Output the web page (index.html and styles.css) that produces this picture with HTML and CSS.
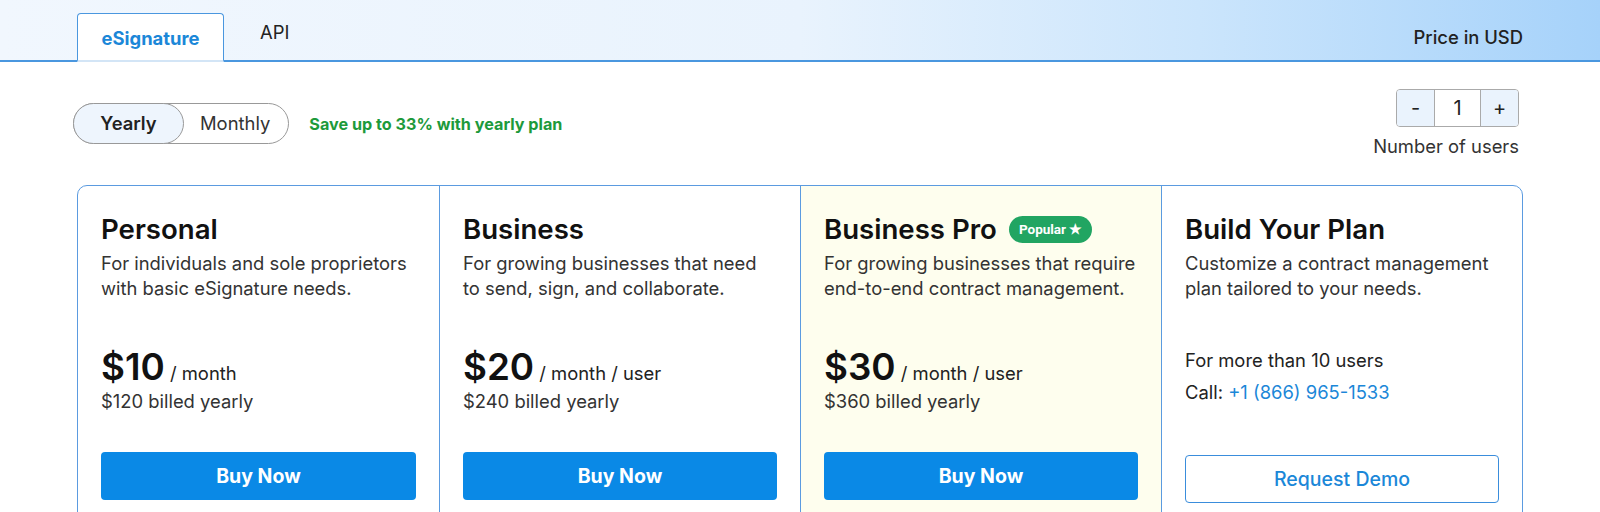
FILE: index.html
```html
<!DOCTYPE html>
<html lang="en">
<head>
    <meta charset="UTF-8">
    <title>Pricing</title>
    <link rel="stylesheet" href="styles.css">
</head>
<body>
    <div id="top-bar">
        <ul id="tabs">
            <li class="tab active">eSignature</li>
            <li class="tab">API</li>
        </ul>
        <div class="currency">Price in USD</div>
    </div>

    <div id="wrap">
        <div class="controls">
            <div class="billing">
                <div class="switch">
                    <span class="switch-opt on">Yearly</span>
                    <span class="switch-opt">Monthly</span>
                </div>
                <span class="save-note">Save up to 33% with yearly plan</span>
            </div>
            <div class="users">
                <div class="stepper">
                    <button class="step-btn">-</button>
                    <span class="step-val">1</span>
                    <button class="step-btn">+</button>
                </div>
                <div class="users-label">Number of users</div>
            </div>
        </div>

        <div class="plans">
            <div class="plan">
                <h2 class="plan-name">Personal</h2>
                <p class="plan-desc">For individuals and sole proprietors<br>with basic eSignature needs.</p>
                <div class="plan-body">
                    <div class="price"><b>$10</b>&nbsp;/ month</div>
                    <div class="billed">$120 billed yearly</div>
                </div>
                <button class="btn buy">Buy Now</button>
            </div>
            <div class="plan">
                <h2 class="plan-name">Business</h2>
                <p class="plan-desc">For growing businesses that need<br>to send, sign, and collaborate.</p>
                <div class="plan-body">
                    <div class="price"><b>$20</b>&nbsp;/ month / user</div>
                    <div class="billed">$240 billed yearly</div>
                </div>
                <button class="btn buy">Buy Now</button>
            </div>
            <div class="plan popular">
                <h2 class="plan-name">Business Pro <span class="badge">Popular &#9733;</span></h2>
                <p class="plan-desc">For growing businesses that require<br>end-to-end contract management.</p>
                <div class="plan-body">
                    <div class="price"><b>$30</b>&nbsp;/ month / user</div>
                    <div class="billed">$360 billed yearly</div>
                </div>
                <button class="btn buy">Buy Now</button>
            </div>
            <div class="plan">
                <h2 class="plan-name">Build Your Plan</h2>
                <p class="plan-desc">Customize a contract management<br>plan tailored to your needs.</p>
                <div class="plan-body contact">
                    <div class="contact-line">For more than 10 users</div>
                    <div class="contact-line">Call: <a href="#">+1 (866) 965-1533</a></div>
                </div>
                <button class="btn demo">Request Demo</button>
            </div>
        </div>
    </div>
</body>
</html>
```

FILE: styles.css
```css
body{
    margin: 0;
    font-family: Inter, "Noto Sans", sans-serif;
    font-size: 18.4px;
    color: #222;
    background: #fff;
}
#top-bar{
    height: 60px;
    display: flex;
    justify-content: space-between;
    padding: 0 77px;
    background: linear-gradient(90deg, #f1f7fe 0%, #e9f3fd 50%, #cbe5fc 75%, #a6d2fa 100%);
    border-bottom: 2px solid #4a97df;
}
#tabs{
    display: flex;
    align-items: flex-start;
    list-style: none;
    margin: 0;
    padding: 0;
}
.tab{
    font-size: 18.4px;
    line-height: 24px;
    color: #222;
    padding: 20px 0 0;
    margin-left: 36px;
}
.tab.active{
    width: 145px;
    height: 34px;
    margin: 13px 0 -2px;
    padding: 12px 0 0;
    text-align: center;
    font-weight: bold;
    color: #1b87d8;
    background: #fff;
    border: 1px solid #4a97df;
    border-bottom: 2px solid #d3e5f6;
    border-radius: 4px 4px 0 0;
}
.currency{
    font-size: 18.4px;
    font-weight: 500;
    padding-top: 25px;
    line-height: 24px;
}
#wrap{
    margin: 0 77px;
    padding-top: 27px;
}
.controls{
    display: flex;
    justify-content: space-between;
    align-items: flex-start;
}
.billing{
    display: flex;
    align-items: center;
    margin: 14px 0 0 -4px;
}
.switch{
    display: flex;
    height: 39px;
    border: 1px solid #999;
    border-radius: 21px;
}
.switch-opt{
    font-size: 18.4px;
    line-height: 39px;
    padding: 0 18px 0 16px;
    color: #333;
}
.switch-opt.on{
    width: 111px;
    box-sizing: border-box;
    margin: -1px 0 -1px -1px;
    padding: 0;
    line-height: 39px;
    text-align: center;
    font-weight: 600;
    color: #222;
    background: #eef5fd;
    border: 1px solid #999;
    border-radius: 21px;
}
.save-note{
    font-size: 16.2px;
    font-weight: bold;
    color: #1d9a3b;
    margin-left: 20px;
}
.users{
    display: flex;
    flex-direction: column;
    align-items: flex-end;
    margin-right: 4px;
}
.stepper{
    display: flex;
    height: 36px;
    border: 1px solid #aaa;
    border-radius: 4px;
    overflow: hidden;
}
.step-btn{
    width: 37px;
    border: 0;
    padding: 0;
    background: #eaf3fd;
    font-family: Inter, sans-serif;
    font-size: 20px;
    color: #222;
}
.step-val{
    width: 45px;
    text-align: center;
    font-size: 20px;
    line-height: 36px;
    border-left: 1px solid #aaa;
    border-right: 1px solid #aaa;
    background: #fff;
}
.users-label{
    font-size: 18.4px;
    line-height: 24px;
    margin-top: 7px;
    color: #333;
}
.plans{
    display: grid;
    grid-template-columns: repeat(4, 1fr);
    margin-top: 27px;
    border: 1px solid #5b9be0;
    border-radius: 10px;
    overflow: hidden;
}
.plan{
    padding: 26px 23px 60px 23px;
    border-left: 1px solid #5b9be0;
}
.plan:first-child{
    border-left: 0;
}
.plan.popular{
    background: #fefeee;
}
.plan-name{
    display: flex;
    align-items: center;
    margin: 0;
    font-size: 27.6px;
    line-height: 34px;
    font-weight: 600;
    color: #111;
}
.badge{
    font-family: Roboto, sans-serif;
    font-size: 13.5px;
    font-weight: bold;
    line-height: 27px;
    color: #fff;
    background: #21a562;
    border-radius: 14px;
    padding: 0 10px;
    margin-left: 12px;
}
.plan-desc{
    margin: 5px 0 0;
    font-size: 18.4px;
    line-height: 25px;
    color: #333;
}
.plan-body{
    height: 151px;
    box-sizing: border-box;
    padding-top: 43px;
}
.price{
    display: flex;
    align-items: baseline;
    height: 45px;
    font-size: 18.4px;
    color: #222;
}
.price b{
    font-size: 36.8px;
    line-height: 45px;
    font-weight: 600;
    color: #111;
}
.billed{
    font-size: 18.4px;
    line-height: 25px;
    color: #333;
}
.plan-body.contact{
    height: 154px;
    padding-top: 47px;
}
.contact-line{
    font-size: 18.4px;
    line-height: 25px;
    margin-bottom: 7px;
    color: #222;
}
.contact-line a{
    color: #1b87d8;
    text-decoration: none;
}
.btn{
    display: block;
    width: 100%;
    height: 48px;
    font-family: Inter, sans-serif;
    font-size: 19.5px;
    border-radius: 4px;
    cursor: pointer;
}
.buy{
    font-weight: bold;
    color: #fff;
    background: #0a89e6;
    border: 0;
}
.demo{
    font-weight: 500;
    color: #1b87d8;
    background: #fff;
    border: 1px solid #3a8ddc;
}
```
